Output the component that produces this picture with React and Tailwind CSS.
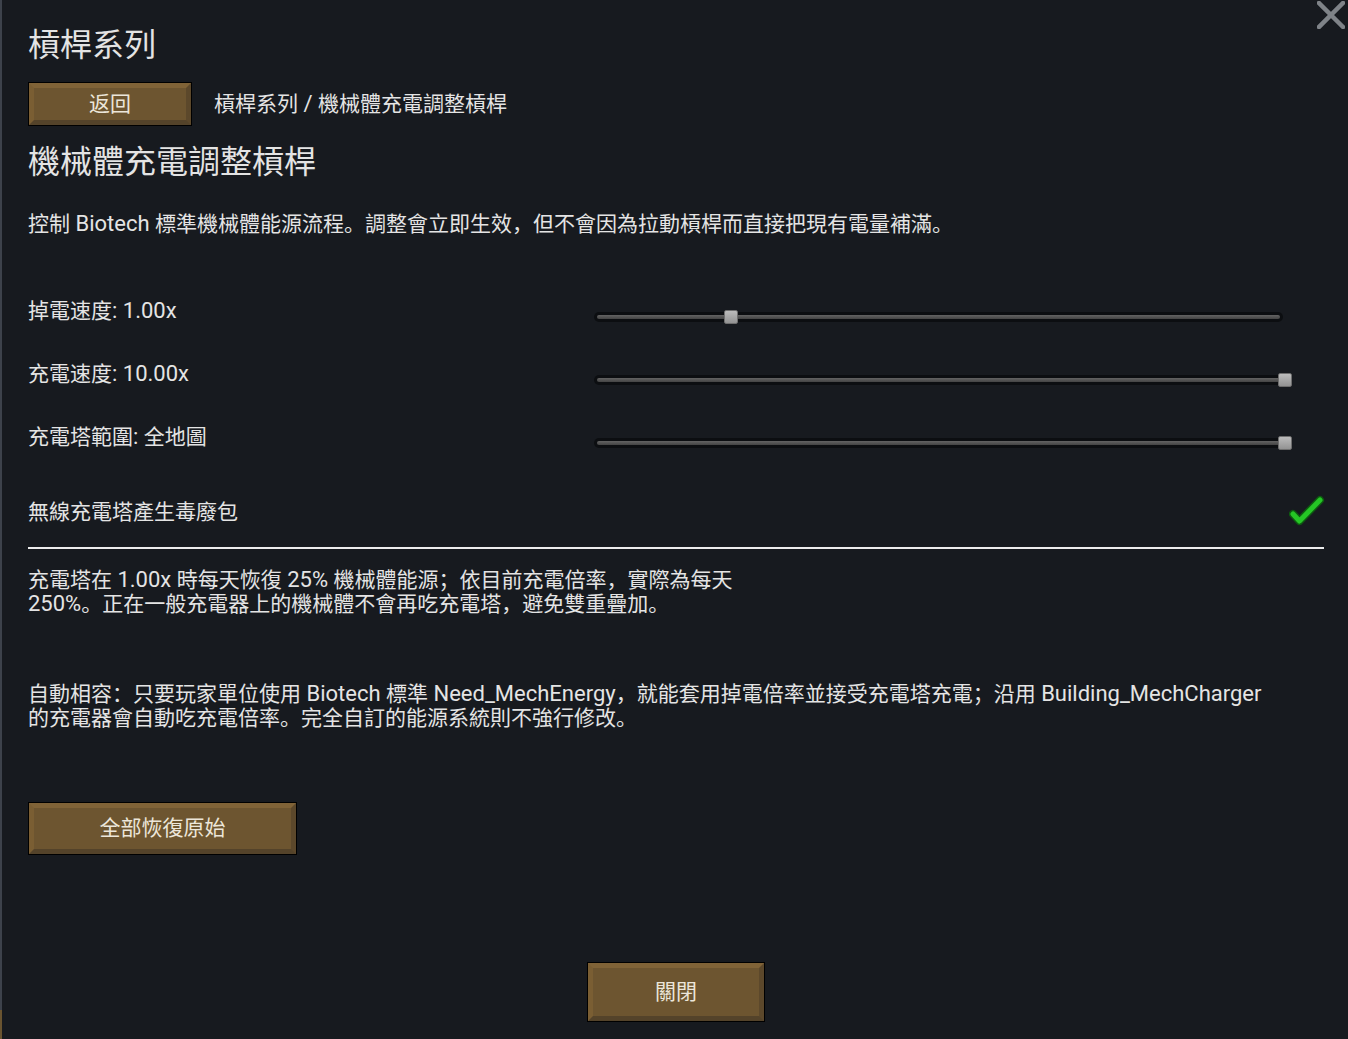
import React from "react";

const FONT = { fontFamily: '"Roboto", "Noto Sans CJK SC", "Noto Sans CJK TC", sans-serif' };

// Latin runs are set a touch larger than the CJK runs around them.
function Mixed({ text }) {
  const parts = text.split(/([\x20-\x7e]+)/);
  return (
    <>
      {parts.map((p, i) =>
        /^[\x20-\x7e]+$/.test(p) ? (
          <span key={i} className="text-[22px]">
            {p}
          </span>
        ) : (
          <React.Fragment key={i}>{p}</React.Fragment>
        )
      )}
    </>
  );
}

function BevelButton({ label, className = "" }) {
  return (
    <div className={`border border-black bg-black ${className}`}>
      <div className="w-full h-full flex items-center justify-center border-[5px] border-t-[#806337] border-l-[#7a5e33] border-b-[#54432a] border-r-[#5c482b] bg-[#6d5530] text-[#ece6da] text-[21px] leading-none">
        {label}
      </div>
    </div>
  );
}

function Slider({ thumbLeft }) {
  return (
    <div className="relative w-[689px] h-[10px] mt-[13px]">
      <div className="w-full h-full rounded-full bg-[#0c0e11] p-[3px]">
        <div className="w-full h-full rounded-full bg-gradient-to-b from-[#636363] to-[#444444]" />
      </div>
      <div
        className="absolute top-[-2px] w-[14px] h-[14px] rounded-[2px] border border-[#6e6e6e] bg-gradient-to-b from-[#bcbcbc] to-[#939393]"
        style={{ left: thumbLeft }}
      />
    </div>
  );
}

function SliderRow({ label, thumbLeft }) {
  return (
    <div className="flex items-start h-[63px]">
      <div className="w-[566px] text-[21px] leading-[24px]">
        <Mixed text={label} />
      </div>
      <Slider thumbLeft={thumbLeft} />
    </div>
  );
}

export default function App() {
  return (
    <div
      className="relative w-[1348px] h-[1039px] bg-[#171a1f] text-[#e4e4e4] overflow-hidden"
      style={FONT}
    >
      {/* window edge */}
      <div className="absolute left-0 top-0 w-[2px] h-[1010px] bg-[#3d424b]" />
      <div className="absolute left-0 top-[1010px] w-[2px] h-[29px] bg-[#6a5430]" />

      {/* close cross */}
      <svg
        className="absolute top-[1px] right-[3px]"
        width="28"
        height="28"
        viewBox="0 0 28 28"
      >
        <path d="M2 2 L26 26 M26 2 L2 26" stroke="#7f8388" strokeWidth="4.5" strokeLinecap="square" />
      </svg>

      <div className="flex flex-col pl-[28px] pr-[24px] pt-[26px]">
        <h1 className="text-[32px] leading-[38px] font-normal">槓桿系列</h1>

        <div className="flex items-center mt-[18px] h-[44px]">
          <BevelButton label="返回" className="w-[164px] h-[44px]" />
          <div className="ml-[22px] text-[21px] leading-[24px]">
            <Mixed text="槓桿系列 / 機械體充電調整槓桿" />
          </div>
        </div>

        <h2 className="mt-[17px] text-[32px] leading-[38px] font-normal">機械體充電調整槓桿</h2>

        <p className="mt-[31px] text-[21px] leading-[24px]">
          <Mixed text="控制 Biotech 標準機械體能源流程。調整會立即生效，但不會因為拉動槓桿而直接把現有電量補滿。" />
        </p>

        <div className="mt-[63px] flex flex-col">
          <SliderRow label="掉電速度: 1.00x" thumbLeft={130} />
          <SliderRow label="充電速度: 10.00x" thumbLeft={684} />
          <SliderRow label="充電塔範圍: 全地圖" thumbLeft={684} />
        </div>

        <div className="flex items-center justify-between mt-[12px] h-[24px]">
          <div className="text-[21px] leading-[24px]">無線充電塔產生毒廢包</div>
          <svg width="36" height="34" viewBox="0 0 36 34" className="mr-[-1px]">
            <path
              d="M4 19 L10.5 26 L31 5"
              fill="none"
              stroke="#0d5a10"
              strokeWidth="8"
              strokeLinecap="round"
              strokeLinejoin="round"
            />
            <path
              d="M4 19 L10.5 26 L31 5"
              fill="none"
              stroke="#25c625"
              strokeWidth="5"
              strokeLinecap="round"
              strokeLinejoin="round"
            />
          </svg>
        </div>

        <div className="mt-[23px] h-[2px] bg-[#ececec]" />

        <p className="mt-[19px] text-[21px] leading-[24px]">
          <span className="block">
            <Mixed text="充電塔在 1.00x 時每天恢復 25% 機械體能源；依目前充電倍率，實際為每天" />
          </span>
          <span className="block">
            <Mixed text="250%。正在一般充電器上的機械體不會再吃充電塔，避免雙重疊加。" />
          </span>
        </p>

        <p className="mt-[66px] text-[21px] leading-[24px]">
          <span className="block whitespace-nowrap">
            <Mixed text="自動相容：只要玩家單位使用 Biotech 標準 Need_MechEnergy，就能套用掉電倍率並接受充電塔充電；沿用 Building_MechCharger" />
          </span>
          <span className="block">
            <Mixed text="的充電器會自動吃充電倍率。完全自訂的能源系統則不強行修改。" />
          </span>
        </p>

        <BevelButton label="全部恢復原始" className="mt-[72px] w-[269px] h-[53px]" />

        <div className="mt-[107px] flex justify-center">
          <BevelButton label="關閉" className="w-[178px] h-[60px]" />
        </div>
      </div>
    </div>
  );
}
